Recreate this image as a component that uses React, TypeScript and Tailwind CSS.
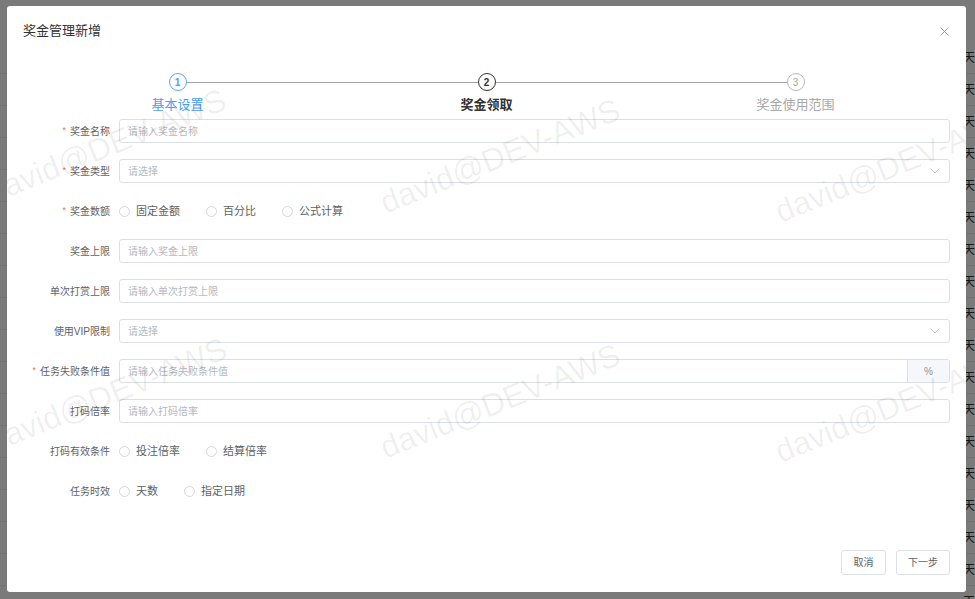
import React from 'react';

type StepState = 'done' | 'active' | 'wait';

interface StepItem {
  n: number;
  label: string;
  state: StepState;
}

const steps: StepItem[] = [
  { n: 1, label: '基本设置', state: 'done' },
  { n: 2, label: '奖金领取', state: 'active' },
  { n: 3, label: '奖金使用范围', state: 'wait' },
];

const circleClass: Record<StepState, string> = {
  done: 'border-[#5aa6f5] text-[#4a9ef5] font-bold',
  active: 'border-[#303133] text-[#303133] font-bold',
  wait: 'border-[#b8b8b8] text-[#a8a8a8]',
};

const labelClass: Record<StepState, string> = {
  done: 'text-[#4a9ef5]',
  active: 'text-[#303133] font-bold',
  wait: 'text-[#a8a8a8]',
};

const Chevron = () => (
  <svg width="10" height="6" viewBox="0 0 10 6" className="mr-[9px] shrink-0">
    <polyline points="0.5,0.5 5,5 9.5,0.5" fill="none" stroke="#c0c4cc" strokeWidth="0.9" />
  </svg>
);

const Label: React.FC<{ text: string; required?: boolean }> = ({ text, required }) => (
  <div className="w-[96px] shrink-0 pr-[9px] flex items-center justify-end text-[10px] text-[#606266]">
    {required && <span className="text-[#f56c6c] mr-[4px] text-[9px]">*</span>}
    {text}
  </div>
);

const TextInput: React.FC<{ placeholder: string; select?: boolean; suffix?: string }> = ({ placeholder, select, suffix }) => (
  <div className="flex-1 h-[24px] border border-[#dcdfe6] rounded-[3px] flex items-center bg-white/70 overflow-hidden">
    <span className="flex-1 pl-[8px] text-[10px] text-[#b4b8c0]">{placeholder}</span>
    {select && <Chevron />}
    {suffix && (
      <span className="w-[42px] h-full bg-[#f5f7fa] border-l border-[#dcdfe6] flex items-center justify-center text-[10px] text-[#909399]">
        {suffix}
      </span>
    )}
  </div>
);

const Radios: React.FC<{ options: string[] }> = ({ options }) => (
  <div className="flex-1 flex items-center">
    {options.map((o) => (
      <label key={o} className="flex items-center mr-[26px]">
        <span className="w-[11px] h-[11px] rounded-full border border-[#d4d7de] bg-white" />
        <span className="ml-[6px] text-[11px] text-[#606266]">{o}</span>
      </label>
    ))}
  </div>
);

const Row: React.FC<{ label: string; required?: boolean; children: React.ReactNode }> = ({ label, required, children }) => (
  <div className="h-[24px] flex items-center">
    <Label text={label} required={required} />
    {children}
  </div>
);

// 背景のテーブル行 (オーバーレイの下)
const bgRows = Array.from({ length: 18 }, (_, i) => i);

export default function App() {
  return (
    <div className="relative w-full h-[599px] overflow-hidden bg-white font-['Liberation_Sans','Noto_Sans_CJK_SC',sans-serif]">
      {/* 下のページ */}
      <div className="flex flex-col pt-[42px]">
        {bgRows.map((i) => (
          <div key={i} className="h-[32px] border-b border-[#ebeef5] flex items-center text-[12px] text-[#333]">
            <span className="w-[967px]" />
            <span>天</span>
          </div>
        ))}
        <div className="h-[20px] flex items-start text-[12px] text-[#333]">
          <span className="w-[58px]" />
          <span className="w-[137px]">时间设置</span>
          <span className="w-[445px]" />
          <span>任务时效</span>
        </div>
      </div>
      <div className="absolute inset-0 bg-black/[0.52]" />

      {/* モーダル */}
      <div className="absolute left-[7px] top-[6px] w-[959px] h-[586px] bg-white rounded-[3px] overflow-hidden flex flex-col">
        <div className="h-[50px] shrink-0 px-[16px] flex items-center justify-between">
          <span className="text-[13px] text-[#303133]">奖金管理新增</span>
          <svg width="9" height="9" viewBox="0 0 9 9" className="mr-[1px]">
            <path d="M0.5 0.5L8.5 8.5M8.5 0.5L0.5 8.5" stroke="#909399" strokeWidth="0.9" />
          </svg>
        </div>

        {/* ステップ */}
        <div className="px-[16px] pt-[17px] grid grid-cols-3">
          {steps.map((s, idx) => (
            <div key={s.n} className="flex flex-col items-center">
              <div className="w-full flex items-center">
                <div className={idx === 0 ? 'flex-1' : 'flex-1 h-px bg-[#a3a3a8]'} />
                <div className={`w-[18px] h-[18px] rounded-full border bg-white flex items-center justify-center text-[10px] ${circleClass[s.state]}`}>
                  {s.n}
                </div>
                <div className={idx === steps.length - 1 ? 'flex-1' : 'flex-1 h-px bg-[#a3a3a8]'} />
              </div>
              <div className={`mt-[5px] h-[18px] leading-[18px] text-[13px] ${labelClass[s.state]}`}>{s.label}</div>
            </div>
          ))}
        </div>

        {/* フォーム */}
        <div className="mt-[5px] pl-[16px] pr-[16px] flex flex-col gap-[16px]">
          <Row label="奖金名称" required>
            <TextInput placeholder="请输入奖金名称" />
          </Row>
          <Row label="奖金类型" required>
            <TextInput placeholder="请选择" select />
          </Row>
          <Row label="奖金数额" required>
            <Radios options={['固定金额', '百分比', '公式计算']} />
          </Row>
          <Row label="奖金上限">
            <TextInput placeholder="请输入奖金上限" />
          </Row>
          <Row label="单次打赏上限">
            <TextInput placeholder="请输入单次打赏上限" />
          </Row>
          <Row label="使用VIP限制">
            <TextInput placeholder="请选择" select />
          </Row>
          <Row label="任务失败条件值" required>
            <TextInput placeholder="请输入任务失败条件值" suffix="%" />
          </Row>
          <Row label="打码倍率">
            <TextInput placeholder="请输入打码倍率" />
          </Row>
          <Row label="打码有效条件">
            <Radios options={['投注倍率', '结算倍率']} />
          </Row>
          <Row label="任务时效">
            <Radios options={['天数', '指定日期']} />
          </Row>
        </div>

        <div className="flex-1" />

        <div className="px-[16px] pb-[17px] flex justify-end gap-[10px]">
          <button className="w-[45px] h-[25px] border border-[#dcdfe6] rounded-[3px] bg-white text-[10px] text-[#606266]">取消</button>
          <button className="w-[54px] h-[25px] border border-[#dcdfe6] rounded-[3px] bg-white text-[10px] text-[#606266]">下一步</button>
        </div>

        {/* ウォーターマーク */}
        <div className="absolute inset-0 pointer-events-none text-[32px] text-black/[0.065] whitespace-nowrap">
          <span className="absolute left-[99px] top-[140px] -translate-x-1/2 -translate-y-1/2 -rotate-[22deg]">david@DEV-AWS</span>
          <span className="absolute left-[493px] top-[150px] -translate-x-1/2 -translate-y-1/2 -rotate-[22deg]">david@DEV-AWS</span>
          <span className="absolute left-[888px] top-[159px] -translate-x-1/2 -translate-y-1/2 -rotate-[22deg]">david@DEV-AWS</span>
          <span className="absolute left-[100px] top-[389px] -translate-x-1/2 -translate-y-1/2 -rotate-[22deg]">david@DEV-AWS</span>
          <span className="absolute left-[493px] top-[395px] -translate-x-1/2 -translate-y-1/2 -rotate-[22deg]">david@DEV-AWS</span>
          <span className="absolute left-[888px] top-[399px] -translate-x-1/2 -translate-y-1/2 -rotate-[22deg]">david@DEV-AWS</span>
        </div>
      </div>
    </div>
  );
}
